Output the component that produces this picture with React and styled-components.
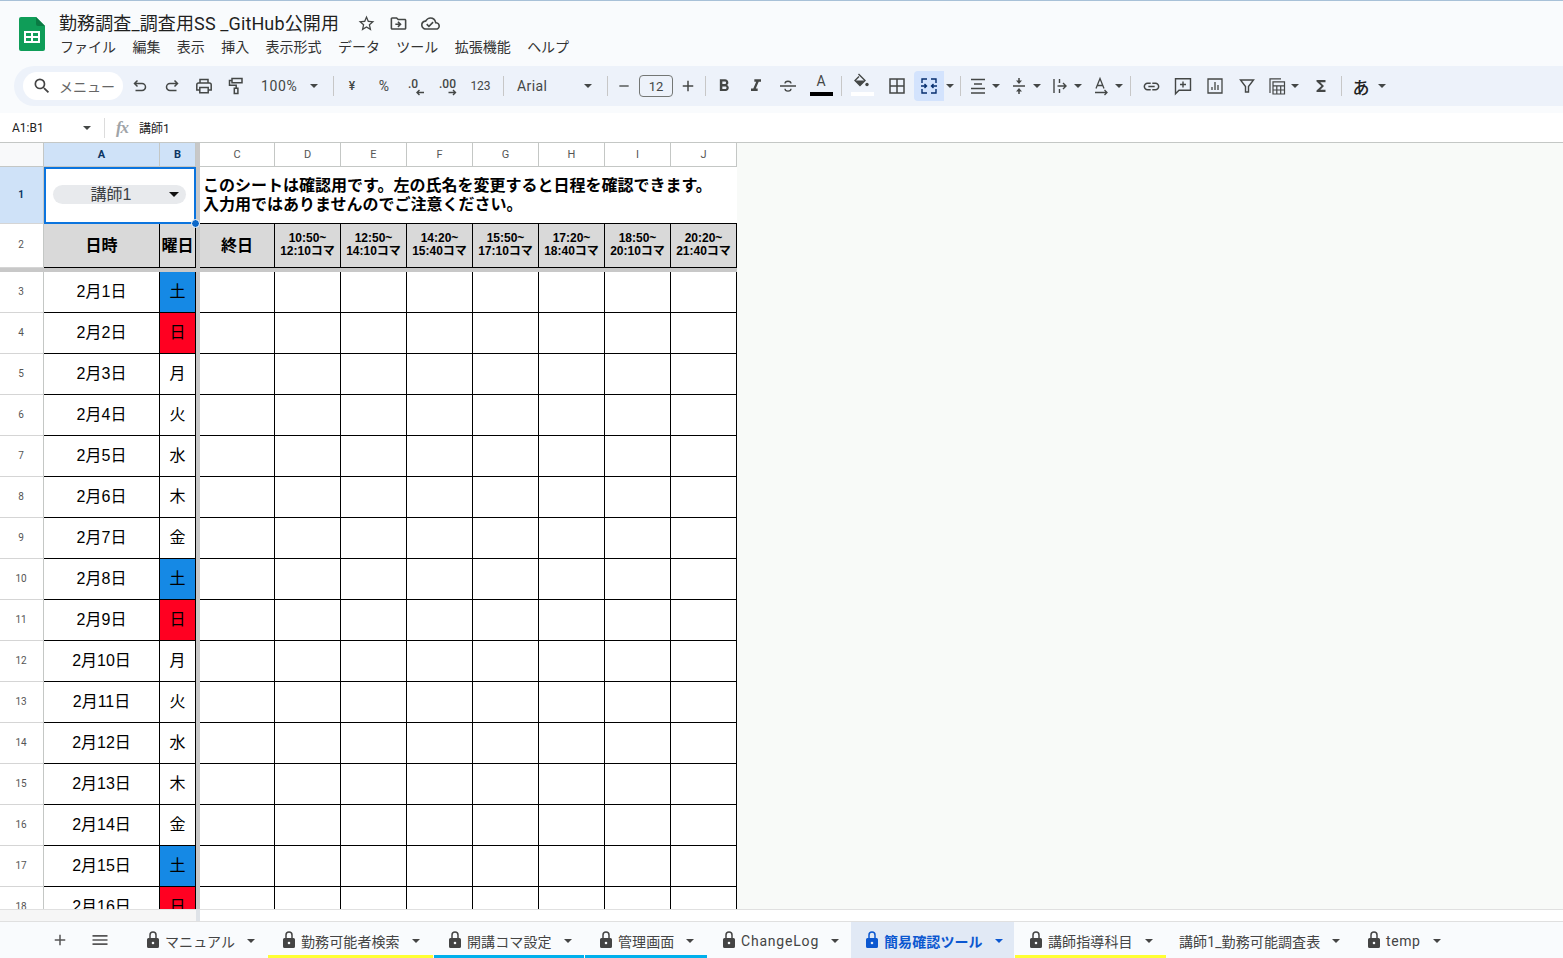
import React from "react";
import styled, { createGlobalStyle } from "styled-components";
import {
  MdSearch, MdFormatBold, MdFormatItalic, MdLink, MdFunctions,
  MdStarBorder, MdOutlineDriveFileMove, MdOutlineCloudDone, MdMenu, MdAdd, MdRemove,
} from "react-icons/md";

const UI = `Roboto, "Noto Sans CJK JP", sans-serif`;
const CELL = `"Liberation Sans", "Noto Sans CJK JP", sans-serif`;

const GlobalStyle = createGlobalStyle`
  html, body { margin: 0; padding: 0; background: #f9fbfd; overflow: hidden; }
  body { font-family: ${UI}; color: #1f1f1f; }
`;

const Page = styled.div`
  width: 1563px;
  height: 958px;
  display: flex;
  flex-direction: column;
  overflow: hidden;
`;

const Header = styled.header`
  height: 113px;
  box-sizing: border-box;
  border-top: 1px solid #a8c1d8;
  background: #f9fbfd;
  flex: none;
`;

const TitleArea = styled.div`
  display: flex;
  height: 46px;
  padding: 10px 0 0 19px;
  margin-bottom: 9px;
`;

const Logo = styled.svg`
  width: 26px;
  height: 34px;
  margin: 6px 14px 0 0;
  flex: none;
`;

const TitleRow = styled.div`
  display: flex;
  align-items: center;
  height: 24px;
  margin-bottom: 2px;
`;

const DocTitle = styled.div`
  font-size: 18px;
  line-height: 24px;
  padding-top: 2px;
  letter-spacing: 0.12px;
  color: #1f1f1f;
  width: 291px;
  white-space: nowrap;
`;

const TitleIcon = styled.span`
  width: 32px;
  display: flex;
  justify-content: center;
  color: #444746;
  font-size: 19px;
`;

const MenuBar = styled.nav`
  display: flex;
  gap: 16.4px;
  font-size: 14px;
  line-height: 20px;
  padding-left: 1px;
  color: #333;
`;

const Toolbar = styled.div`
  height: 40px;
  margin-left: 14px;
  display: flex;
  align-items: center;
  background: #edf2fa;
  border-radius: 20px 0 0 20px;
  color: #444746;
`;

const SearchPill = styled.div`
  width: 100px;
  height: 28px;
  margin: 0 1px 0 9px;
  background: #fff;
  border-radius: 14px;
  display: flex;
  align-items: center;
  padding: 0 0 1px 9px;
  box-sizing: border-box;
  gap: 7px;
  font-size: 14px;
  color: #666;
  flex: none;
`;

const ToolButton = styled.div`
  width: ${(p) => p.$w || 32}px;
  height: 30px;
  display: flex;
  align-items: center;
  justify-content: center;
  position: relative;
  font-size: ${(p) => p.$size || 19}px;
  flex: none;
  color: #444746;
`;

const ActiveButton = styled(ToolButton)`
  background: #d3e3fd;
  border-radius: 4px 0 0 4px;
  color: #062e6f;
`;

const ToolText = styled(ToolButton)`
  font-size: ${(p) => p.$size || 12}px;
  font-weight: ${(p) => p.$weight || 400};
  letter-spacing: ${(p) => p.$ls || 0}px;
  justify-content: ${(p) => (p.$left ? "flex-start" : "center")};
  padding-left: ${(p) => p.$pad || 0}px;
  box-sizing: border-box;
  color: ${(p) => p.$c || "#444746"};
`;

const Sep = styled.span`
  width: 1px;
  height: 20px;
  background: #c7c7c7;
  margin: 0 ${(p) => p.$r ?? 2}px 0 ${(p) => p.$l ?? 8}px;
  flex: none;
`;

const Caret = styled.span`
  width: 0;
  height: 0;
  border-left: 4px solid transparent;
  border-right: 4px solid transparent;
  border-top: 4px solid ${(p) => p.$c || "#444746"};
  flex: none;
`;

const CaretSlot = styled.span`
  width: ${(p) => p.$w || 14}px;
  margin-left: ${(p) => p.$ml || 0}px;
  display: flex;
  justify-content: ${(p) => (p.$start ? "flex-start" : "center")};
  flex: none;
`;

const FontSizeBox = styled.div`
  width: 34px;
  height: 22px;
  border: 1px solid #747775;
  border-radius: 4px;
  box-sizing: border-box;
  display: flex;
  align-items: center;
  justify-content: center;
  font-size: 13px;
  flex: none;
`;

const ColorBar = styled.span`
  position: absolute;
  left: ${(p) => p.$l}px;
  bottom: 5px;
  width: 23px;
  height: 4px;
  background: ${(p) => p.$c};
`;

const ColorLetter = styled.span`
  font-size: 14px;
  line-height: 14px;
  position: relative;
  top: -5px;
`;

const Glyph = styled.svg`
  width: 20px;
  height: 20px;
  fill: none;
  stroke: currentColor;
  stroke-width: ${(p) => p.$sw || 1.5};
  flex: none;
`;

const FormulaBar = styled.div`
  height: 29px;
  flex: none;
  background: #fff;
  display: flex;
  align-items: center;
  font-size: 12px;
  color: #222;
`;

const NameBox = styled.div`
  width: 105px;
  padding: 0 13px 0 12px;
  box-sizing: border-box;
  display: flex;
  justify-content: space-between;
  align-items: center;
  border-right: 1px solid #dcdcdc;
  height: 20px;
`;

const FxMark = styled.span`
  font-family: "Liberation Serif", serif;
  font-style: italic;
  font-weight: 700;
  font-size: 17px;
  color: #a0a4a8;
  width: 34px;
  text-align: center;
  letter-spacing: -1px;
`;

const Sheet = styled.div`
  height: 767px;
  flex: none;
  box-sizing: border-box;
  border-top: 1px solid #c4c7c5;
  background: #f8faf8;
  display: grid;
  grid-template-columns: 44px 116px 36px 4px 75px repeat(7, 66px) 1fr;
  grid-template-rows: 24px 57px 44px 4px;
  grid-auto-rows: 41px;
  overflow: hidden;
  font-family: ${CELL};
`;

const Centered = styled.div`
  box-sizing: border-box;
  display: flex;
  align-items: center;
  justify-content: center;
  min-width: 0;
`;

const Corner = styled(Centered)`
  background: #f8f9fa;
  border-right: 1px solid #c4c7c5;
  border-bottom: 1px solid #c4c7c5;
`;

const ColHead = styled(Centered)`
  font-family: ${UI};
  font-size: 11px;
  color: ${(p) => (p.$on ? "#0b3563" : "#555")};
  font-weight: ${(p) => (p.$on ? 700 : 400)};
  background: ${(p) => (p.$on ? "#cfe2f8" : "#fff")};
  border-right: 1px solid #c4c7c5;
  border-bottom: 1px solid #c4c7c5;
`;

const RowHead = styled(Centered)`
  grid-column: 1;
  font-family: ${UI};
  font-size: 10px;
  padding: 0 1px 2px 0;
  color: ${(p) => (p.$on ? "#0b3563" : "#555")};
  font-weight: ${(p) => (p.$on ? 700 : 400)};
  background: ${(p) => (p.$on ? "#cfe2f8" : "#fff")};
  border-right: 1px solid #c4c7c5;
  border-bottom: 1px solid #d5d5d5;
`;

const FreezeV = styled.div`
  background: #c8c8c8;
`;

const FreezeH = styled.div`
  grid-column: 1 / 13;
  background: #c8c8c8;
`;

const SelectedCell = styled(Centered)`
  grid-column: span 2;
  position: relative;
  background: #fff;
  border: 2px solid #0b74de;
  padding: 0 8px 2px 7px;
`;

const Handle = styled.span`
  position: absolute;
  right: -6px;
  bottom: -6px;
  width: 7px;
  height: 7px;
  background: #0b67c9;
  border: 1px solid #fff;
  border-radius: 50%;
  z-index: 2;
`;

const Chip = styled.div`
  width: 133px;
  height: 19px;
  background: #e8eaed;
  border-radius: 10px;
  display: flex;
  align-items: center;
  position: relative;
  justify-content: center;
  font-size: 16px;
  color: #3c4043;
  padding: 0 17px 3px 0;
  box-sizing: border-box;
`;

const ChipCaret = styled.span`
  position: absolute;
  right: 7px;
  top: 7px;
  border-left: 5px solid transparent;
  border-right: 5px solid transparent;
  border-top: 5px solid #111;
`;

const NoteCell = styled.div`
  grid-column: span 8;
  background: #fff;
  box-sizing: border-box;
  border-bottom: 1px solid #000;
  font-weight: 700;
  font-size: 16px;
  line-height: 19px;
  color: #000;
  padding: 9px 0 0 3px;
  white-space: nowrap;
`;

const Cell = styled(Centered)`
  background: ${(p) => p.$bg || "#fff"};
  border-right: 1px solid #000;
  border-bottom: 1px solid #000;
  color: #000;
  font-size: 16px;
  padding-bottom: ${(p) => (p.$bold ? 3 : 5)}px;
  font-weight: ${(p) => (p.$bold ? 700 : 400)};
`;

const TimeCell = styled(Cell)`
  font-size: 12px;
  line-height: 13.5px;
  padding-bottom: 1px;
  text-align: center;
  white-space: nowrap;
`;

const ScrollStrip = styled.div`
  height: 13px;
  flex: none;
  box-sizing: border-box;
  border-top: 1px solid #e0e0e0;
  border-bottom: 1px solid #e0e0e0;
  background: #fff;
  display: flex;
`;

const ScrollFrozen = styled.div`
  width: 196px;
  background: #f6f6f6;
`;

const ScrollBar = styled.div`
  width: 4px;
  background: #dfe3e8;
`;

const TabBar = styled.footer`
  height: 36px;
  flex: none;
  background: #f9fbfd;
  display: flex;
  align-items: stretch;
  padding-left: 40px;
  color: #444;
`;

const BarButton = styled.div`
  width: 40px;
  display: flex;
  align-items: center;
  justify-content: center;
  color: #555;
  margin-right: ${(p) => p.$gap || 0}px;
`;

const Tab = styled.div`
  width: ${(p) => p.$w}px;
  box-sizing: border-box;
  padding: 4px 0 0 ${(p) => p.$pad ?? 10}px;
  display: flex;
  align-items: center;
  flex: none;
  font-size: 14px;
  letter-spacing: ${(p) => p.$ls ?? 0.1}px;
  white-space: nowrap;
  background: ${(p) => (p.$active ? "#e1e9f5" : "transparent")};
  color: ${(p) => (p.$active ? "#0b57d0" : "#444")};
  font-weight: ${(p) => (p.$active ? 700 : 400)};
  border-bottom: 3px solid ${(p) => p.$line || "transparent"};
  margin-right: ${(p) => p.$gap || 0}px;
`;

const TabCaret = styled(Caret)`
  margin-left: 12px;
`;

const LockSvg = styled.svg`
  width: 12px;
  height: 17px;
  margin: 0 6px 2px 3px;
  flex: none;
`;

function Lock() {
  return (
    <LockSvg viewBox="0 0 12 17">
      <path d="M3 8V4a3 3 0 0 1 6 0v4" fill="none" stroke="currentColor" strokeWidth="1.5" />
      <path fillRule="evenodd" fill="currentColor" d="M1.5 7h9A1.5 1.5 0 0 1 12 8.500v7a1.500 1.500 0 0 1-1.500 1.500h-9A1.500 1.500 0 0 1 0 15.500v-7A1.500 1.500 0 0 1 1.500 7zM6 10.700a1.300 1.300 0 1 0 0 2.600 1.300 1.300 0 0 0 0-2.600z" />
    </LockSvg>
  );
}

function SheetsLogo() {
  return (
    <Logo viewBox="0 0 26 34">
      <path d="M2 0h15l9 9v23a2 2 0 0 1-2 2H2a2 2 0 0 1-2-2V2a2 2 0 0 1 2-2z" fill="#0f9d58" />
      <path d="M17 0l9 9h-7a2 2 0 0 1-2-2z" fill="#0a7a43" />
      <path d="M5 14h16v12H5zM7 16v3h5v-3zm7 0v3h5v-3zM7 21v3h5v-3zm7 0v3h5v-3z" fill="#fff" fillRule="evenodd" />
    </Logo>
  );
}

function Decimal({ label, x, dir }) {
  return (
    <ToolText $w={32}>
      <svg width="32" height="30" viewBox="0 0 32 30">
        <text x={x} y="17" fontSize="12" fontWeight="500" fontFamily="Roboto" fill="#444746">{label}</text>
        {dir > 0 ? (
          <path d="M16.500 21.500h7m-2.500-2.500l2.500 2.500-2.500 2.500" fill="none" stroke="#444746" strokeWidth="1.400" />
        ) : (
          <path d="M24 21.500h-7m2.500-2.500l-2.500 2.500 2.500 2.500" fill="none" stroke="#444746" strokeWidth="1.400" />
        )}
      </svg>
    </ToolText>
  );
}

const Icons = {
  undo: <path d="M7.500 4.500L4.500 7.500l3 3M4.500 7.500H12a3.500 3.500 0 0 1 0 7H5.500" />,
  redo: <path d="M12.500 4.500l3 3-3 3M15.500 7.500H8a3.500 3.500 0 0 0 0 7h6.500" />,
  print: <path d="M6 7V3.500h8V7M5.500 14H2.800V8.800A1.800 1.800 0 0 1 4.600 7h10.800a1.800 1.800 0 0 1 1.800 1.800V14h-2.700M5.800 11.500h8.400v5.300H5.800z" />,
  paint: <path d="M6 2.500h10v4.300H6zM6 4.500H3.500v4.700h6.700v3M8.300 12.300h3.600v5.200H8.300z" />,
  strike: <path d="M2 10h16M7 7.500C7 4.500 13 4.500 13 7.500M7 12.800C7 15.800 13 15.800 13 12.800" />,
  borders: <path d="M3 3h14v14H3zM10 3v14M3 10h14" />,
  merge: <path d="M8 3H3v4M12 3h5v4M8 17H3v-4M12 17h5v-4M2 10h5.500m-2-2l2 2-2 2M18 10h-5.500m2-2l-2 2 2 2" />,
  align: <path d="M3 3.500h14M6 8h8M3 12.500h14M3 17h14" />,
  wrap: <path d="M4 3v14M9.500 3v4M9.500 13v4M7.500 10H16m-3-3l3 3-3 3" />,
  rotate: <path d="M5 12.500L9 2.500l4 10M6.200 9.500h5.600M4 16.500h12m-2.500-2.500l2.500 2.500-2.500 2.500" />,
  comment: <path d="M2.500 2.800h15v11.400H6l-3.500 3.500zM10 5.500v6M7 8.500h6" />,
  chart: <path d="M3 3h14v14H3zM7 14v-3M10 14V6M13 14V9" />,
  filter: <path d="M3.500 4h13l-5 6.500v5.500H8.500v-5.500z" />,
  table: <path d="M14 2.800H3V17M6 5.800h11.500V18H6zM6 9.800h11.500M6 14h11.500M9.800 9.800V18M13.700 9.800V18" />,
};

function Icon({ name, sw }) {
  return <Glyph viewBox="0 0 20 20" $sw={sw}>{Icons[name]}</Glyph>;
}

function FillIcon() {
  return (
    <svg width="16" height="14" viewBox="0 0 16 14">
      <path d="M5.500 1L12 7.500 7 12.500 2 7.500 6 3.500" fill="none" stroke="currentColor" strokeWidth="1.400" />
      <path d="M2 7.500h10L7 12.500z" fill="currentColor" />
      <circle cx="14" cy="11.500" r="1.700" fill="currentColor" />
    </svg>
  );
}

function ValignIcon() {
  return (
    <Glyph viewBox="0 0 20 20">
      <path d="M4 10h12M10 2v3M10 18v-3" />
      <path d="M7 4.500h6L10 8zM7 15.500h6L10 12z" fill="currentColor" stroke="none" />
    </Glyph>
  );
}

const Dates = Array.from({ length: 16 }, (_, i) => i + 1);
const Days = ["土", "日", "月", "火", "水", "木", "金"];
const DayColors = { 土: "#1589e5", 日: "#ff0021" };
const Times = [
  ["10:50~", "12:10コマ"], ["12:50~", "14:10コマ"], ["14:20~", "15:40コマ"], ["15:50~", "17:10コマ"],
  ["17:20~", "18:40コマ"], ["18:50~", "20:10コマ"], ["20:20~", "21:40コマ"],
];
const Cols = ["C", "D", "E", "F", "G", "H", "I", "J"];
const Menus = ["ファイル", "編集", "表示", "挿入", "表示形式", "データ", "ツール", "拡張機能", "ヘルプ"];
const Tabs = [
  { name: "マニュアル", w: 131, pad: 7, lock: true },
  { name: "勤務可能者検索", w: 165, pad: 12, lock: true, line: "#ffff33", gap: 1 },
  { name: "開講コマ設定", w: 150, pad: 12, lock: true, line: "#00b0ec", gap: 1 },
  { name: "管理画面", w: 122, pad: 12, lock: true, line: "#00b0ec" },
  { name: "ChangeLog", w: 144, pad: 13, lock: true, ls: 0.8 },
  { name: "簡易確認ツール", w: 163, pad: 12, lock: true, active: true, gap: 1 },
  { name: "講師指導科目", w: 151, pad: 12, lock: true, line: "#ffff33" },
  { name: "講師1_勤務可能調査表", w: 184, pad: 13 },
  { name: "temp", w: 110, pad: 15, lock: true, ls: 0.6 },
];

export default function App() {
  return (
    <Page>
      <GlobalStyle />
      <Header>
        <TitleArea>
          <SheetsLogo />
          <div>
            <TitleRow>
              <DocTitle>勤務調査_調査用SS _GitHub公開用</DocTitle>
              <TitleIcon><MdStarBorder /></TitleIcon>
              <TitleIcon><MdOutlineDriveFileMove /></TitleIcon>
              <TitleIcon><MdOutlineCloudDone /></TitleIcon>
            </TitleRow>
            <MenuBar>{Menus.map((m) => <span key={m}>{m}</span>)}</MenuBar>
          </div>
        </TitleArea>
        <Toolbar>
          <SearchPill><MdSearch size={20} color="#444" />メニュー</SearchPill>
          <ToolButton><Icon name="undo" /></ToolButton>
          <ToolButton><Icon name="redo" /></ToolButton>
          <ToolButton><Icon name="print" /></ToolButton>
          <ToolButton><Icon name="paint" /></ToolButton>
          <ToolText $w={73} $size={14} $ls={0.6} $left $pad={9}>100%<CaretSlot $w={8} $ml={13}><Caret /></CaretSlot></ToolText>
          <Sep />
          <ToolText $weight={500}>¥</ToolText>
          <ToolText $size={14}>%</ToolText>
          <Decimal label=".0" x={8} dir={-1} />
          <Decimal label=".00" x={7} dir={1} />
          <ToolText $w={33}>123</ToolText>
          <Sep $l={6} />
          <ToolText $w={101} $size={14} $ls={0.4} $left $pad={11}>Arial<CaretSlot $w={8} $ml={37}><Caret /></CaretSlot></ToolText>
          <Sep $l={0} $r={0} />
          <ToolButton $w={31}><MdRemove size={16} /></ToolButton>
          <FontSizeBox>12</FontSizeBox>
          <ToolButton $w={30}><MdAdd size={18} /></ToolButton>
          <Sep $l={2} $r={2} />
          <ToolButton><MdFormatBold size={20} /></ToolButton>
          <ToolButton><MdFormatItalic size={20} /></ToolButton>
          <ToolButton><Icon name="strike" sw={1.3} /></ToolButton>
          <ToolButton $w={34}><ColorLetter>A</ColorLetter><ColorBar $l={6} $c="#000" /></ToolButton>
          <Sep $l={3} $r={1} />
          <ToolButton $w={36}><ColorLetter><FillIcon /></ColorLetter><ColorBar $l={8} $c="#fff" /></ToolButton>
          <ToolButton $w={35}><Icon name="borders" /></ToolButton>
          <ActiveButton $w={30}><Icon name="merge" sw={1.4} /></ActiveButton>
          <CaretSlot $w={12}><Caret /></CaretSlot>
          <Sep $l={4} $r={3} />
          <ToolButton $w={28}><Icon name="align" sw={1.3} /></ToolButton>
          <CaretSlot $w={13} $start><Caret /></CaretSlot>
          <ToolButton $w={28}><ValignIcon /></ToolButton>
          <CaretSlot $w={13} $start><Caret /></CaretSlot>
          <ToolButton $w={28}><Icon name="wrap" sw={1.4} /></ToolButton>
          <CaretSlot $w={13} $start><Caret /></CaretSlot>
          <ToolButton $w={28}><Icon name="rotate" sw={1.3} /></ToolButton>
          <CaretSlot $w={13} $start><Caret /></CaretSlot>
          <Sep $l={2} $r={4} />
          <ToolButton><MdLink size={19} /></ToolButton>
          <ToolButton><Icon name="comment" sw={1.4} /></ToolButton>
          <ToolButton><Icon name="chart" sw={1.3} /></ToolButton>
          <ToolButton><Icon name="filter" sw={1.4} /></ToolButton>
          <ToolButton $w={28}><Icon name="table" sw={1.2} /></ToolButton>
          <CaretSlot $w={8}><Caret /></CaretSlot>
          <ToolButton $w={44}><MdFunctions size={18} /></ToolButton>
          <Sep $l={-2} $r={3} />
          <ToolText $w={32} $size={17} $weight={500} $c="#222">あ</ToolText>
          <CaretSlot $w={10}><Caret /></CaretSlot>
        </Toolbar>
      </Header>

      <FormulaBar>
        <NameBox>A1:B1<Caret /></NameBox>
        <FxMark>fx</FxMark>
        <span>講師1</span>
      </FormulaBar>

      <Sheet>
        <Corner />
        <ColHead $on>A</ColHead>
        <ColHead $on>B</ColHead>
        <FreezeV />
        {Cols.map((c) => <ColHead key={c}>{c}</ColHead>)}

        <RowHead $on>1</RowHead>
        <SelectedCell>
          <Chip>講師1<ChipCaret /></Chip>
          <Handle />
        </SelectedCell>
        <FreezeV />
        <NoteCell>
          このシートは確認用です。左の氏名を変更すると日程を確認できます。<br />
          入力用ではありませんのでご注意ください。
        </NoteCell>

        <RowHead>2</RowHead>
        <Cell $bg="#d9d9d9" $bold>日時</Cell>
        <Cell $bg="#d9d9d9" $bold>曜日</Cell>
        <FreezeV />
        <Cell $bg="#d9d9d9" $bold>終日</Cell>
        {Times.map(([a, b]) => (
          <TimeCell key={a} $bg="#d9d9d9" $bold><div>{a}<br />{b}</div></TimeCell>
        ))}

        <FreezeH />

        {Dates.map((d, i) => {
          const day = Days[i % 7];
          return (
            <React.Fragment key={d}>
              <RowHead>{d + 2}</RowHead>
              <Cell>2月{d}日</Cell>
              <Cell $bg={DayColors[day]}>{day}</Cell>
              <FreezeV />
              {Cols.map((c) => <Cell key={c} />)}
            </React.Fragment>
          );
        })}
      </Sheet>

      <ScrollStrip>
        <ScrollFrozen />
        <ScrollBar />
      </ScrollStrip>

      <TabBar>
        <BarButton><MdAdd size={18} /></BarButton>
        <BarButton $gap={17}><MdMenu size={20} /></BarButton>
        {Tabs.map((t) => (
          <Tab key={t.name} $w={t.w} $pad={t.pad} $line={t.line} $active={t.active} $gap={t.gap} $ls={t.ls}>
            {t.lock && <Lock />}
            {t.name}
            <TabCaret $c={t.active ? "#0b57d0" : "#444"} />
          </Tab>
        ))}
      </TabBar>
    </Page>
  );
}
